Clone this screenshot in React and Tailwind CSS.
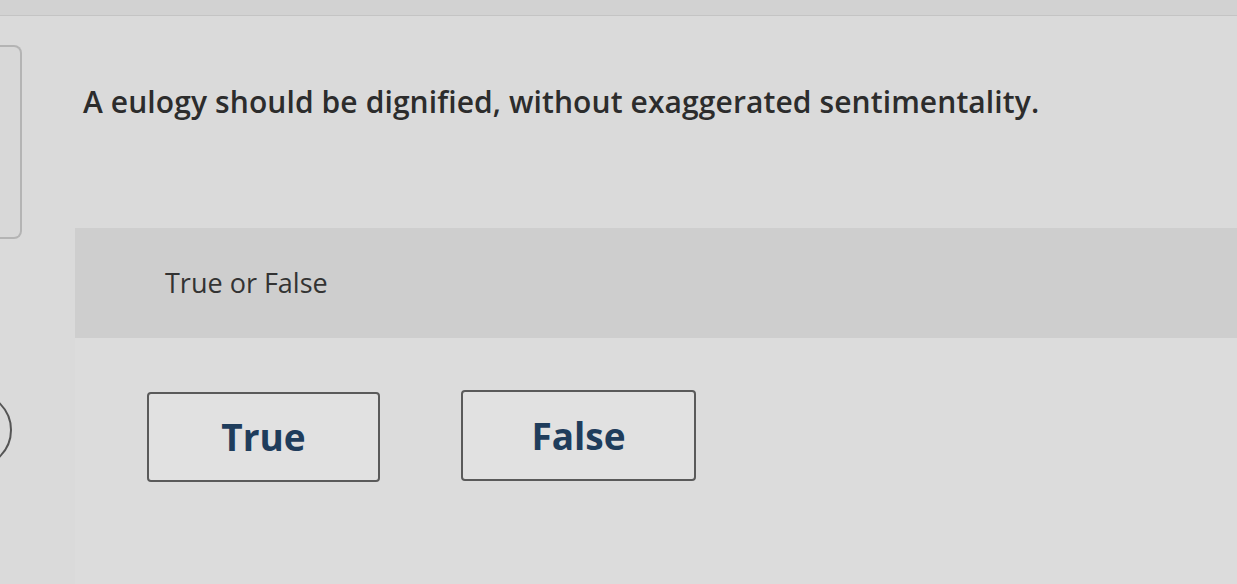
import { useState } from "react"

const FONT = { fontFamily: '"Open Sans", "Noto Sans", sans-serif' }

function Choice({ label, active, onClick, className = "" }) {
  return (
    <button
      type="button"
      onClick={onClick}
      className={`flex items-center justify-center rounded-[4px] border-2 border-[#5a5a5a] bg-[#e1e1e1] text-[37px] font-bold text-[#1f3d5c] ${active ? "ring-2 ring-[#1f3d5c]" : ""} ${className}`}
    >
      {label}
    </button>
  )
}

export default function App() {
  const [answer, setAnswer] = useState(null)

  return (
    <div style={FONT} className="h-[584px] w-[1237px] overflow-hidden bg-[#dadada]">
      <div className="h-[16px] border-b border-[#c4c4c4] bg-[#d2d2d2]" />

      <div className="flex h-[212px] items-start">
        {/* left rail card, cut off by the viewport */}
        <div className="mt-[29px] h-[194px] w-[22px] shrink-0 rounded-r-[8px] border-2 border-l-0 border-[#b4b4b4] bg-[#d8d8d8]" />
        <h1 className="ml-[61px] mt-[68px] text-[30px] font-semibold leading-[36px] tracking-[0.1px] text-[#2c2c2c]">
          A eulogy should be dignified, without exaggerated sentimentality.
        </h1>
      </div>

      <div className="flex">
        <div className="relative w-[75px] shrink-0">
          <div className="absolute left-[-64px] top-[164px] h-[76px] w-[76px] rounded-full border-2 border-[#555]" />
        </div>
        <section className="flex-1">
          <div className="flex h-[110px] items-center bg-[#cecece] pl-[90px]">
            <span className="text-[27px] text-[#333]">True or False</span>
          </div>
          <div className="flex h-[250px] gap-[81px] bg-[#dcdcdc] pl-[72px] pt-[54px]">
            <Choice className="h-[90px] w-[233px]" label="True" active={answer === "true"} onClick={() => setAnswer("true")} />
            <Choice className="-mt-[2px] h-[91px] w-[235px]" label="False" active={answer === "false"} onClick={() => setAnswer("false")} />
          </div>
        </section>
      </div>
    </div>
  )
}
